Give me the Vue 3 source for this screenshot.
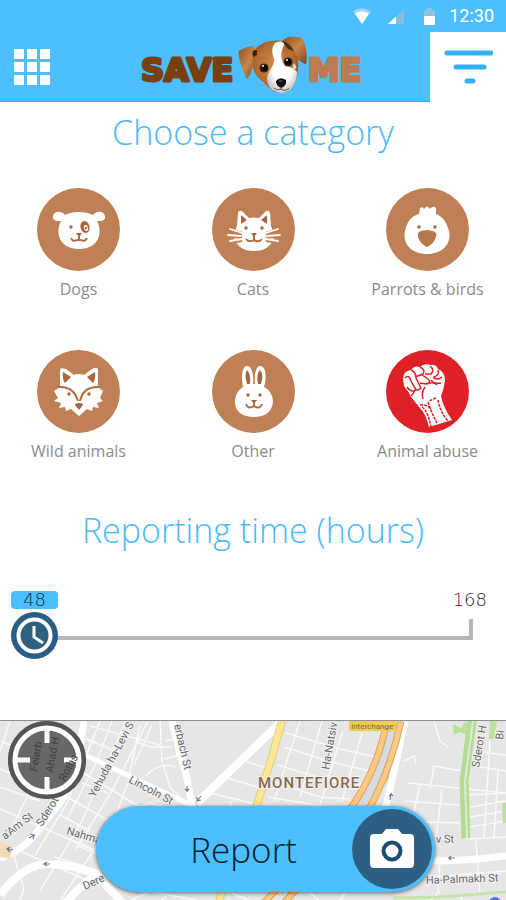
<template>
    <div class="app">
        <div class="status-bar">
            <svg class="wifi" width="20" height="18" viewBox="0 0 20 18" aria-hidden="true">
                <path d="M1 4.500Q10-2 19 4.500L10 17Z" fill="#9fd5f2" />
                <path d="M3 6.500Q10 2.500 17 6.500L10 17Z" fill="#fff" />
            </svg>
            <svg class="signal" width="18" height="17" viewBox="0 0 18 17" aria-hidden="true">
                <path d="M17 1V16H1Z" fill="#83c0dd" />
                <path d="M9 8.500V16H1Z" fill="#fff" />
            </svg>
            <svg class="battery" width="13" height="19" viewBox="0 0 13 19" aria-hidden="true">
                <path d="M4 1h5v2h3v7H1V3h3z" fill="#8fc6df" />
                <path d="M1 9h11v8q0 1-1 1H2q-1 0-1-1z" fill="#fff" />
            </svg>
            <span class="time">12:30</span>
        </div>

        <header class="header">
            <button type="button" class="menu-btn" aria-label="Menu">
                <svg width="36" height="36" viewBox="0 0 36 36" fill="#fff">
                    <template v-for="row in 3" :key="row">
                        <rect v-for="col in 3" :key="col" :x="(col - 1) * 13" :y="(row - 1) * 13" width="10" height="10" />
                    </template>
                </svg>
            </button>

            <svg class="logo" width="226" height="64" viewBox="0 0 226 64" role="img" aria-label="Save me">
                <defs>
                    <linearGradient id="ear" x1="0" y1="0" x2="1" y2="1">
                        <stop offset="0" stop-color="#8a4c1d" />
                        <stop offset="0.5" stop-color="#c98549" />
                        <stop offset="1" stop-color="#7b431b" />
                    </linearGradient>
                    <radialGradient id="fur" cx="0.5" cy="0.45" r="0.6">
                        <stop offset="0" stop-color="#d28a4c" />
                        <stop offset="0.7" stop-color="#b36a30" />
                        <stop offset="1" stop-color="#74401b" />
                    </radialGradient>
                    <radialGradient id="muzzle" cx="0.5" cy="0.4" r="0.6">
                        <stop offset="0.6" stop-color="#fff" />
                        <stop offset="1" stop-color="#cfc9c6" />
                    </radialGradient>
                </defs>
                <text class="logo-text save" x="1" y="46">SAVE</text>
                <text class="logo-text me" x="168" y="46">ME</text>
                <path d="M113 17C118 9 129 4 142 6C153 8 160 20 158 34C157 46 153 57 141 58C131 57 128 51 122 46C113 39 110 27 113 17Z" fill="url(#fur)" />
                <path d="M135 8C131 13 132 18 134 24C135 31 128 35 127 43C127 51 132 57 141 58C151 58 157 48 157 37C153 31 144 32 142 25C140 18 143 12 145 8Q140 5 135 8Z" fill="url(#muzzle)" />
                <path d="M117 15C114 9 106 12 99 16C97 20 103 37 107 44C112 39 115 27 113 21Z" fill="url(#ear)" />
                <path d="M113 22Q111 14 117 15L117 20Z" fill="#3c2010" />
                <path d="M142 6C148 0 156 2 162 3C166 9 168 21 166 29C159 28 155 20 153 14Z" fill="url(#ear)" />
                <path d="M142 6Q149 7 154 16L148 14Z" fill="#4a2913" />
                <ellipse cx="124" cy="33" rx="4.500" ry="4.500" fill="#39200f" />
                <ellipse cx="148" cy="27" rx="4.500" ry="4.500" fill="#39200f" />
                <circle cx="125" cy="33" r="3" fill="#080808" />
                <circle cx="148" cy="27" r="3" fill="#080808" />
                <circle cx="123" cy="31" r="1" fill="#fff" />
                <circle cx="147" cy="25" r="1" fill="#fff" />
                <path d="M154 28q4 5 1 6q-4 0-1-6z" fill="#bfe5fa" />
                <path d="M136 46Q140 41 146 45Q147 51 141 53Q136 51 136 46Z" fill="#111" />
                <path d="M139 46h3" stroke="#777" />
                <path d="M141 52v2Q145 57 149 53M141 54Q137 56 134 53" fill="none" stroke="#555" />
            </svg>

            <button type="button" class="filter-btn" aria-label="Filter">
                <svg width="50" height="34" viewBox="0 0 50 34" fill="none" stroke="#34b2f5" stroke-width="5" stroke-linecap="round">
                    <path d="M4 3H48M13 17H41M24 31H30" />
                </svg>
            </button>
        </header>

        <main class="content">
            <h1 class="title">Choose a category</h1>
            <div class="categories">
                <button v-for="item in categories" :key="item.name" type="button" class="category">
                    <svg class="category-icon" width="83" height="83" viewBox="0 0 83 83" aria-hidden="true">
                        <circle cx="41.500" cy="41.500" r="41.500" :fill="item.color" />
                        <g v-if="item.icon === 'dog'">
                            <path d="M28 27C24 22 17 23 16 28C15 33 20 33 24 33C21 39 21 44 22 48C24 57 33 61 42 61C51 61 60 57 62 48C63 44 63 39 60 33C64 33 69 33 68 28C67 23 60 22 56 27C49 23 35 23 28 27Z" fill="#fff" />
                            <circle cx="34" cy="39" r="1.700" />
                            <ellipse cx="48" cy="39" rx="4.500" ry="6" transform="rotate(-15 48 39)" />
                            <ellipse cx="49" cy="40" rx="2" ry="3" transform="rotate(-15 49 40)" fill="#fff" />
                            <circle cx="49" cy="40" r="1.200" />
                            <path d="M39 45h6l-3 4z" />
                            <path class="line" d="M42 48v4M34 50Q36 55 42 51Q48 55 50 50" />
                        </g>
                        <g v-else-if="item.icon === 'cat'">
                            <path d="M26 25Q27 21 31 24L37 30Q42 29 47 30L53 24Q57 21 58 25L59 38Q63 45 61 52C58 60 50 63 42 63C34 63 26 60 23 52Q21 45 25 38Z" fill="#fff" />
                            <path d="M29 27L35 32L29 36ZM55 27L49 32L55 36Z" />
                            <circle cx="34" cy="40" r="1.700" />
                            <circle cx="50" cy="40" r="1.700" />
                            <path d="M39 45h6l-3 4z" />
                            <path class="line" d="M42 48v4M34 51Q37 55 42 52Q47 55 50 51" />
                            <path d="M30 46L18 42M30 49L16 47M30 52L18 54M54 46L66 42M54 49L68 47M54 52L66 54" stroke="#bf8055" stroke-width="4" />
                            <path d="M30 45L18 41M29 48L16 47M30 51L18 53M54 45L66 41M55 48L68 47M54 51L66 53" stroke="#fff" stroke-width="1.800" stroke-linecap="round" />
                        </g>
                        <g v-else-if="item.icon === 'bird'">
                            <path d="M33 26L34 20Q37 18 38 21Q41 16 44 21Q47 17 50 20L50 26C58 29 61 36 63 43C66 56 56 66 41 66C27 66 16 57 19 43C21 34 25 28 33 26Z" fill="#fff" />
                            <circle cx="33" cy="39" r="1.700" />
                            <circle cx="49" cy="39" r="1.700" />
                            <path d="M32 49C31 42 36 43 41 42C47 43 52 43 50 49Q48 56 41 59Q34 56 32 49Z" fill="#b8784c" />
                        </g>
                        <g v-else-if="item.icon === 'fox'">
                            <path d="M23 20Q23 17 29 19L37 25Q42 23 47 25L55 19Q61 16 61 20L61 37L66 41L63 48L66 51L60 53L62 58L56 57L55 61L50 59L42 66L34 59L29 61L28 57L22 58L24 53L17 51L21 48L17 41L23 37Z" fill="#fff" />
                            <path d="M26 22L34 27L28 33Q25 29 26 22ZM58 22L50 27L56 33Q59 29 58 22Z" />
                            <path class="line" d="M21 37Q37 36 41 51M63 37Q46 36 43 51" />
                            <circle cx="32" cy="44" r="1.700" />
                            <circle cx="52" cy="44" r="1.700" />
                            <path d="M38 55Q38 53 42 53Q46 53 46 55L42 60Z" />
                        </g>
                        <g v-else-if="item.icon === 'rabbit'">
                            <path d="M31 37C29 27 30 16 35 16C40 16 42 25 41 34H43C42 25 44 16 48 16C54 16 55 27 52 37C58 40 61 46 61 52C60 62 53 67 42 67C31 67 23 62 23 52C23 45 26 40 31 37Z" fill="#fff" />
                            <path d="M35 34Q32 24 35 20Q39 24 38 34ZM46 34Q44 24 48 20Q52 24 49 34Z" />
                            <circle cx="36" cy="45" r="1.700" />
                            <circle cx="48" cy="45" r="1.700" />
                            <path d="M39 50h6l-3 4z" />
                            <path class="line" d="M42 53v4M34 54Q36 60 42 56Q48 60 50 54" />
                        </g>
                        <g v-else>
                            <path d="M17 29Q17 21 25 20Q28 15 34 17Q38 13 44 15Q50 14 52 19Q59 22 59 30Q58 39 55 46Q57 57 66 70L43 77Q40 64 34 58L25 47Q23 42 18 36Z" fill="#fff" />
                            <path class="fist" d="M19 28Q23 24 25 31L30 40Q25 43 21 37M25 20Q30 22 30 28L35 38Q31 42 29 38M34 17Q40 20 37 24L29 27M36 25L42 29Q46 32 40 34L34 33M44 16Q49 20 45 24L39 24M52 20Q54 25 48 27M47 27Q51 31 56 27M41 34Q48 31 51 35M45 30Q47 34 55 33M39 37Q35 43 37 49M25 46Q28 43 29 40" />
                            <path class="fist dotted" d="M36 57Q42 61 45 77M42 52Q46 64 51 73M52 50Q54 62 62 71M34 55Q42 54 45 60M50 48L43 51" />
                        </g>
                    </svg>
                    <span class="category-name">{{ item.name }}</span>
                </button>
            </div>

            <h2 class="title">Reporting time (hours)</h2>
            <div class="slider">
                <div class="slider-labels">
                    <label for="hours" class="slider-value">{{ hours }}</label>
                    <span class="slider-max">168</span>
                </div>
                <div class="slider-body">
                    <div class="slider-track"></div>
                    <svg class="slider-thumb" :style="{ left: thumbLeft }" width="47" height="47" viewBox="0 0 47 47" aria-hidden="true">
                        <circle cx="23.500" cy="23.500" r="23.500" fill="#2a5d84" />
                        <circle cx="23.500" cy="23.500" r="16" fill="#2f607f" stroke="#fff" stroke-width="4" />
                        <path d="M23 14V25L32 31" fill="none" stroke="#fff" stroke-width="3" />
                    </svg>
                    <input id="hours" v-model.number="hours" class="slider-input" type="range" min="48" max="168">
                </div>
            </div>
        </main>

        <section class="map">
            <svg class="map-canvas" viewBox="0 0 506 180" preserveAspectRatio="xMidYMin slice" aria-hidden="true">
                <rect width="506" height="180" fill="#e6e6e6" />
                <g fill="none" stroke="#fafafa" stroke-width="1.500">
                    <path v-for="(street, i) in streets" :key="i" :d="street" />
                </g>
                <!-- Parks -->
                <path d="M453 3l8 4l4-6l6 3l-4 10l-7-3l-6 3zM490 0h7l-3 18h-5zM502 82h4v20h-3zM389 48l-4 14l5-3z" fill="#b9e19b" />
                <path d="M472 0L464 60L466 117" fill="none" stroke="#b4dc94" stroke-width="9" />
                <path d="M473 0L465 60L467 117" fill="none" stroke="#dceecd" stroke-width="2" />
                <path d="M393 177L440 176L506 171" fill="none" stroke="#c5e3ab" stroke-width="3" />
                <!-- Main roads -->
                <g fill="none" stroke="#fff" stroke-linejoin="round">
                    <path d="M0 137Q24 130 40 107L60 82L76 52L84 0" stroke-width="7" />
                    <path d="M0 174Q22 145 45 143Q75 143 97 154L124 184" stroke-width="8" />
                    <path d="M64 184Q80 164 97 154" stroke-width="8" />
                    <path d="M172 0L180 33L187 57L193 90" stroke-width="7" />
                    <path d="M282 0L253 28L197 82" stroke-width="8" />
                    <path d="M83 33L140 60L193 85" stroke-width="5" />
                    <path d="M405 0L399 28L385 90" stroke-width="7" />
                    <path d="M430 140Q465 140 506 135" stroke-width="7" />
                </g>
                <path d="M282 0L271 39L255 90M222 170L219 182" fill="none" stroke="#e9cd75" stroke-width="8" />
                <path d="M282 0L271 39L255 90M222 170L219 182" fill="none" stroke="#fbe796" stroke-width="6" />
                <path d="M393 0Q381 50 357 90" fill="none" stroke="#d5dae3" stroke-width="12" />
                <path d="M387 0Q376 55 347 92L262 184M401 0Q391 48 367 92L282 184" fill="none" stroke="#dda35d" stroke-width="7" />
                <path d="M387 0Q376 55 347 92L262 184M401 0Q391 48 367 92L282 184" fill="none" stroke="#fbc886" stroke-width="5" />
                <path d="M0 120L13 126L10 138L0 136Z" fill="#f4ddb2" />
                <rect x="349" y="0" width="47" height="10" fill="#f4cb45" />
                <circle cx="495" cy="182" r="6" fill="#4d6fe0" />
                <g fill="none" stroke="#7277a0" stroke-width="1.200">
                    <path d="M13 129l-6-1l3-2m-3 2l3 3M29 117l5-3l-4-1m4 1l-1 4M50 143l-6 0l3-2m-3 2l3 2M187 65v5l-2-2m2 2l2-2M201 75l-4 5l0-4m0 4l4-1M390 79l1-6l-2 2m2-2l2 2M455 137h-6l2-2m-2 2l2 2" />
                </g>
                <g class="street-names">
                    <text
                        v-for="label in labels"
                        :key="label.text"
                        :class="{ plain: label.plain }"
                        :font-size="label.size"
                        :transform="`translate(${label.x} ${label.y}) rotate(${label.angle})`"
                    >{{ label.text }}</text>
                </g>
                <text class="area" x="258" y="67">MONTEFIORE</text>
            </svg>

            <button type="button" class="locate-btn" aria-label="My location">
                <svg width="78" height="78" viewBox="1 1 78 78">
                    <circle cx="40" cy="40" r="39" fill="#505050" fill-opacity="0.850" />
                    <circle cx="40" cy="40" r="36" fill="none" stroke="#555" stroke-width="6" />
                    <circle cx="40" cy="40" r="32" fill="none" stroke="#fff" stroke-width="5" />
                    <path d="M40 10V23M40 57V70M10 40H23M57 40H70" stroke="#fff" stroke-width="5" />
                    <g class="covered-names">
                        <text transform="translate(30 52) rotate(-80)">Feierb</text>
                        <text transform="translate(46 53) rotate(-80)">Ahad H</text>
                        <text transform="translate(58 62) rotate(-62)">Roths</text>
                    </g>
                </svg>
            </button>

            <button type="button" class="report-btn">
                <span class="report-text">Report</span>
                <svg class="camera" width="80" height="80" viewBox="0 0 80 80" aria-hidden="true">
                    <circle cx="40" cy="40" r="40" fill="#2d5f82" />
                    <path d="M22 25H30L34 20H46L50 25H58Q62 25 62 29V55Q62 59 58 59H22Q18 59 18 55V29Q18 25 22 25Z" fill="#fff" />
                    <circle cx="40" cy="42" r="8.500" fill="#fff" stroke="#1f4d75" stroke-width="4" />
                </svg>
            </button>
        </section>
    </div>
</template>

<script setup>
import { ref, computed } from 'vue';

const brown = '#bf8055';

const categories = ref([
    { name: 'Dogs', icon: 'dog', color: brown },
    { name: 'Cats', icon: 'cat', color: brown },
    { name: 'Parrots & birds', icon: 'bird', color: brown },
    { name: 'Wild animals', icon: 'fox', color: brown },
    { name: 'Other', icon: 'rabbit', color: brown },
    { name: 'Animal abuse', icon: 'fist', color: '#df2027' },
]);

const hours = ref(48);

// Keep the clock inside the ends of the track
const thumbLeft = computed(() => {
    const part = (hours.value - 48) / 120;
    return `calc((100% - 47px) * ${part})`;
});

// Side streets of the map
const streets = [
    'M0 20L80 50L150 92M0 48L60 72L130 112M0 66L40 80M0 88L50 110L120 140M20 130L100 165',
    'M100 0L84 40L66 84L35 134M112 0L96 42L66 100M126 0L108 40L82 100L40 170M148 0L112 70L76 128',
    'M10 0L0 30M30 70L10 110M90 5L160 24M86 18L120 32M82 62L108 72M128 62L118 88L100 120L60 180',
    'M134 20L150 26L172 26M140 4L128 60M160 0L162 40L170 66L184 80M152 4L134 44M166 20L182 16M164 38L180 34M146 55Q160 40 176 46',
    'M210 72L260 84M224 56L264 68M232 80L226 95M244 40L270 48M130 90L150 82L170 88M60 94L90 110M78 125L100 134L130 140M54 136L100 150M14 135L24 168L20 180',
    'M286 12L340 28L376 36M284 26L335 42L370 50M278 44L330 60L366 64M272 60L320 76L350 78M268 76L340 88M300 0L274 80M322 0L300 76M343 10L318 90M362 12L342 80',
    'M404 40L414 35L416 42M434 0L440 20L448 26M408 62L506 72M434 45L430 68M434 45L462 50M420 64L412 100M442 68L436 120M404 80L460 84M400 100L460 102',
    'M474 30L506 34M474 45L506 50M470 74L506 72M470 86L506 80M470 96L506 90M470 106L506 100M470 118L506 116M490 20L484 118M498 50L494 116M476 120L480 174M432 156L506 150M440 140L438 170',
    'M130 180L150 170L200 180M170 172L160 180M232 172L250 180M310 172L320 180M345 172L340 180M440 170L430 180M460 174L462 180',
];

const labels = [
    { text: 'Yehuda ha-Levi S', x: 95, y: 77, angle: -62, size: 11 },
    { text: 'Lincoln St', x: 128, y: 61, angle: 28, size: 11 },
    { text: 'erbach St', x: 174, y: 4, angle: 77, size: 11 },
    { text: 'Nahma', x: 66, y: 113, angle: 16, size: 11 },
    { text: 'Dere', x: 85, y: 169, angle: -25, size: 11 },
    { text: 'Sderot', x: 42, y: 106, angle: -58, size: 11 },
    { text: 'a\'Am St', x: 5, y: 119, angle: -38, size: 11 },
    { text: 'Ha-Natsiv', x: 329, y: 49, angle: -80, size: 11 },
    { text: 'Sderot H', x: 479, y: 47, angle: -80, size: 11 },
    { text: 'Bi', x: 503, y: 19, angle: -84, size: 11 },
    { text: 'v St', x: 436, y: 122, angle: -1, size: 11 },
    { text: 'Ha-Palmakh St', x: 426, y: 163, angle: -2, size: 11 },
    { text: 'Interchange', x: 351, y: 8, angle: 0, size: 8, plain: true },
];
</script>

<style>
body {
    margin: 0;
}
</style>

<style scoped>
.app {
    display: flex;
    flex-direction: column;
    min-height: 100vh;
    background: #fff;
    font-family: "Open Sans", "Noto Sans", sans-serif;
}

button {
    padding: 0;
    border: 0;
    background: none;
    font-family: inherit;
    cursor: pointer;
}

svg {
    display: block;
}

/* Status bar */
.status-bar {
    display: flex;
    justify-content: flex-end;
    align-items: center;
    height: 32px;
    padding-right: 12px;
    background: #4dbeff;
}

.signal {
    margin-left: 15px;
}

.battery {
    margin: 0 13px 0 18px;
}

.time {
    color: #fff;
    font: 18px/32px Roboto, sans-serif;
}

/* Header */
.header {
    display: grid;
    grid-template-columns: 76px 1fr 76px;
    align-items: center;
    height: 70px;
    background: #4dbeff;
    box-shadow: inset 0 -1px #2eacf0;
}

.menu-btn {
    justify-self: start;
    margin-left: 14px;
}

.logo {
    justify-self: center;
}

.logo-text {
    font: bold 32px "DejaVu Sans", sans-serif;
    stroke-width: 3px;
    stroke-linejoin: round;
}

.save {
    fill: #77410f;
    stroke: #77410f;
}

.me {
    fill: #bc7c52;
    stroke: #bc7c52;
}

.filter-btn {
    display: flex;
    justify-content: center;
    align-items: center;
    height: 100%;
    background: #fff;
}

/* Categories */
.title {
    margin: 0;
    color: #4dbaf5;
    font-size: 34px;
    font-weight: 350;
    line-height: 44px;
    text-align: center;
}

.content {
    padding-top: 8px;
}

.categories {
    display: grid;
    grid-template-columns: repeat(3, 117px);
    justify-content: space-between;
    row-gap: 49px;
    padding: 34px 20px 45px;
}

.category {
    display: flex;
    flex-direction: column;
    align-items: center;
    gap: 6px;
}

.category-icon {
    fill: #a9673a;
}

.line {
    fill: none;
    stroke: #b06d40;
    stroke-width: 2;
}

.fist {
    fill: none;
    stroke: #df2027;
    stroke-width: 1.5;
}

.dotted {
    stroke-dasharray: 3 1;
}

.category-name {
    color: #8c8c8c;
    font-size: 16px;
    line-height: 24px;
    white-space: nowrap;
}

/* Slider */
.slider {
    padding: 39px 33px 61px 11px;
}

.slider-labels {
    display: flex;
    justify-content: space-between;
    margin-right: -14px;
    font: 18px/18px "DejaVu Sans", sans-serif;
    font-weight: 200;
    color: #1c2a33;
}

.slider-value {
    width: 47px;
    border-radius: 4px;
    background: #4dbeff;
    text-align: center;
}

.slider-body {
    position: relative;
    height: 47px;
    margin-top: 3px;
}

.slider-track {
    height: 17px;
    margin-left: 23px;
    border: solid #b7b7b7;
    border-width: 0 4px 4px 0;
    transform: translateY(7px);
}

.slider-thumb {
    position: absolute;
    top: 0;
}

.slider-input {
    position: absolute;
    inset: 0;
    width: 100%;
    height: 47px;
    margin: 0;
    opacity: 0;
    cursor: pointer;
}

/* Map */
.map {
    position: relative;
    flex: 1;
    min-height: 179px;
    border-top: 1px solid #8f8f8f;
    overflow: hidden;
}

.map-canvas {
    position: absolute;
    width: 100%;
    height: 100%;
}

.street-names {
    fill: #666;
    stroke: #f3f3f3;
    stroke-width: 2px;
    paint-order: stroke;
    font-family: Roboto, sans-serif;
}

.plain {
    stroke: none;
}

.covered-names {
    fill: #3f3f3f;
    font: 11px Roboto, sans-serif;
}

.area {
    fill: #846a49;
    stroke: #f3f3f3;
    stroke-width: 2px;
    paint-order: stroke;
    font: 500 15px Roboto, sans-serif;
    letter-spacing: 1px;
}

.locate-btn {
    position: absolute;
    top: 0;
    left: 8px;
    border-radius: 50%;
}

.report-btn {
    position: absolute;
    bottom: 8px;
    left: 19%;
    display: flex;
    align-items: center;
    width: 67%;
    height: 86px;
    padding: 0 3px;
    border-radius: 43px;
    background: #4dbeff;
    box-shadow: 0 1px 4px rgba(0, 0, 0, 0.6);
}

.report-text {
    flex: 1;
    padding-left: 36px;
    color: #0c1c28;
    font-size: 35px;
    font-weight: 350;
}
</style>
